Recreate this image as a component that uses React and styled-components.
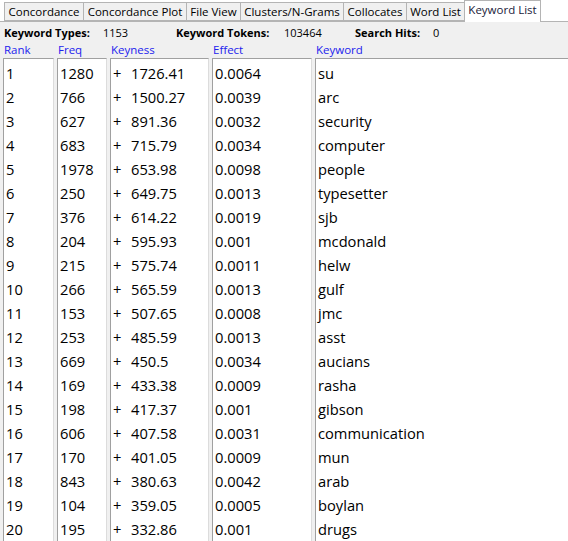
import styled, { createGlobalStyle } from "styled-components";

const GlobalStyle = createGlobalStyle`
  html, body {
    margin: 0;
    padding: 0;
    background: #f0f0f0;
  }
  body {
    font-family: "Open Sans", "Noto Sans", "Liberation Sans", sans-serif;
  }
`;

const tabs = [
  { name: "Concordance", width: 80 },
  { name: "Concordance Plot", width: 104 },
  { name: "File View", width: 55 },
  { name: "Clusters/N-Grams", width: 104 },
  { name: "Collocates", width: 64 },
  { name: "Word List", width: 59 },
  { name: "Keyword List", width: 77, active: true },
];

const rows = [
  [1, 1280, "1726.41", "0.0064", "su"],
  [2, 766, "1500.27", "0.0039", "arc"],
  [3, 627, "891.36", "0.0032", "security"],
  [4, 683, "715.79", "0.0034", "computer"],
  [5, 1978, "653.98", "0.0098", "people"],
  [6, 250, "649.75", "0.0013", "typesetter"],
  [7, 376, "614.22", "0.0019", "sjb"],
  [8, 204, "595.93", "0.001", "mcdonald"],
  [9, 215, "575.74", "0.0011", "helw"],
  [10, 266, "565.59", "0.0013", "gulf"],
  [11, 153, "507.65", "0.0008", "jmc"],
  [12, 253, "485.59", "0.0013", "asst"],
  [13, 669, "450.5", "0.0034", "aucians"],
  [14, 169, "433.38", "0.0009", "rasha"],
  [15, 198, "417.37", "0.001", "gibson"],
  [16, 606, "407.58", "0.0031", "communication"],
  [17, 170, "401.05", "0.0009", "mun"],
  [18, 843, "380.63", "0.0042", "arab"],
  [19, 104, "359.05", "0.0005", "boylan"],
  [20, 195, "332.86", "0.001", "drugs"],
];

const columns = ["Rank", "Freq", "Keyness", "Effect", "Keyword"];

const App = () => {
  return (
    <Window>
      <GlobalStyle />
      <TabStrip>
        {tabs.map((tab) => (
          <Tab key={tab.name} $width={tab.width} $active={tab.active}>
            {tab.name}
          </Tab>
        ))}
      </TabStrip>

      <Panel>
        <Stats>
          <StatLabel>Keyword Types:</StatLabel>
          <StatValue>1153</StatValue>
          <StatLabel>Keyword Tokens:</StatLabel>
          <StatValue>103464</StatValue>
          <StatLabel>Search Hits:</StatLabel>
          <StatValue>0</StatValue>
        </Stats>

        <Columns>
          {columns.map((c) => (
            <HeaderLabel key={c}>{c}</HeaderLabel>
          ))}

          <ListBox>
            {rows.map((r) => (
              <Cell key={r[0]}>{r[0]}</Cell>
            ))}
          </ListBox>
          <ListBox>
            {rows.map((r) => (
              <Cell key={r[0]}>{r[1]}</Cell>
            ))}
          </ListBox>
          <ListBox>
            {rows.map((r) => (
              <Cell key={r[0]}>
                <Sign>+</Sign>
                {r[2]}
              </Cell>
            ))}
          </ListBox>
          <ListBox>
            {rows.map((r) => (
              <Cell key={r[0]}>{r[3]}</Cell>
            ))}
          </ListBox>
          <ListBox $last>
            {rows.map((r) => (
              <Cell key={r[0]}>{r[4]}</Cell>
            ))}
          </ListBox>
        </Columns>
      </Panel>
    </Window>
  );
};

export default App;

const Window = styled.div`
  width: 568px;
  height: 541px;
  overflow: hidden;
  display: flex;
  flex-direction: column;
  background: #f0f0f0;
`;

const TabStrip = styled.div`
  display: flex;
  align-items: flex-end;
  height: 21px;
  padding-left: 4px;
  background: #ffffff;
  border-bottom: 1px solid #b4b4b4;
  flex-shrink: 0;
`;

const Tab = styled.div`
  box-sizing: border-box;
  width: ${(p) => p.$width}px;
  height: ${(p) => (p.$active ? "22px" : "19px")};
  margin-right: -1px;
  margin-bottom: ${(p) => (p.$active ? "-1px" : "0")};
  padding-top: 1px;
  border: 1px solid #b4b4b4;
  border-bottom: ${(p) => (p.$active ? "none" : "1px solid #b4b4b4")};
  background: ${(p) => (p.$active ? "#ffffff" : "#f0f0f0")};
  position: relative;
  z-index: ${(p) => (p.$active ? 1 : 0)};
  font-size: 11.5px;
  line-height: 16px;
  color: ${(p) => (p.$active ? "#1a1a3a" : "#000000")};
  text-align: center;
  white-space: nowrap;
`;

const Panel = styled.div`
  flex: 1;
  display: flex;
  flex-direction: column;
  min-height: 0;
`;

const Stats = styled.div`
  display: grid;
  grid-template-columns: 99px 73px 108px 71px 78px 1fr;
  align-items: center;
  height: 18px;
  margin-top: 1px;
  padding-left: 4px;
  font-size: 11px;
  color: #000;
`;

const StatLabel = styled.span`
  font-weight: bold;
  white-space: nowrap;
`;

const StatValue = styled.span`
  white-space: nowrap;
`;

const Columns = styled.div`
  flex: 1;
  display: grid;
  grid-template-columns: 51px 50px 99px 100px 1fr;
  grid-template-rows: 17px 1fr;
  column-gap: 3px;
  padding-left: 3px;
  min-height: 0;
`;

const HeaderLabel = styled.div`
  padding-left: 1px;
  font-size: 11.5px;
  line-height: 17px;
  color: #2222ee;
  white-space: nowrap;
`;

const ListBox = styled.div`
  box-sizing: border-box;
  background: #ffffff;
  border-top: 1px solid #a0a0a0;
  border-left: 1px solid #a0a0a0;
  border-right: ${(p) => (p.$last ? "none" : "1px solid #dcdcdc")};
  padding-top: 2px;
  overflow: hidden;
`;

const Cell = styled.div`
  height: 24px;
  line-height: 24px;
  padding-left: 2px;
  font-size: 14.7px;
  color: #000;
  white-space: nowrap;
`;

const Sign = styled.span`
  display: inline-block;
  width: 18px;
`;
